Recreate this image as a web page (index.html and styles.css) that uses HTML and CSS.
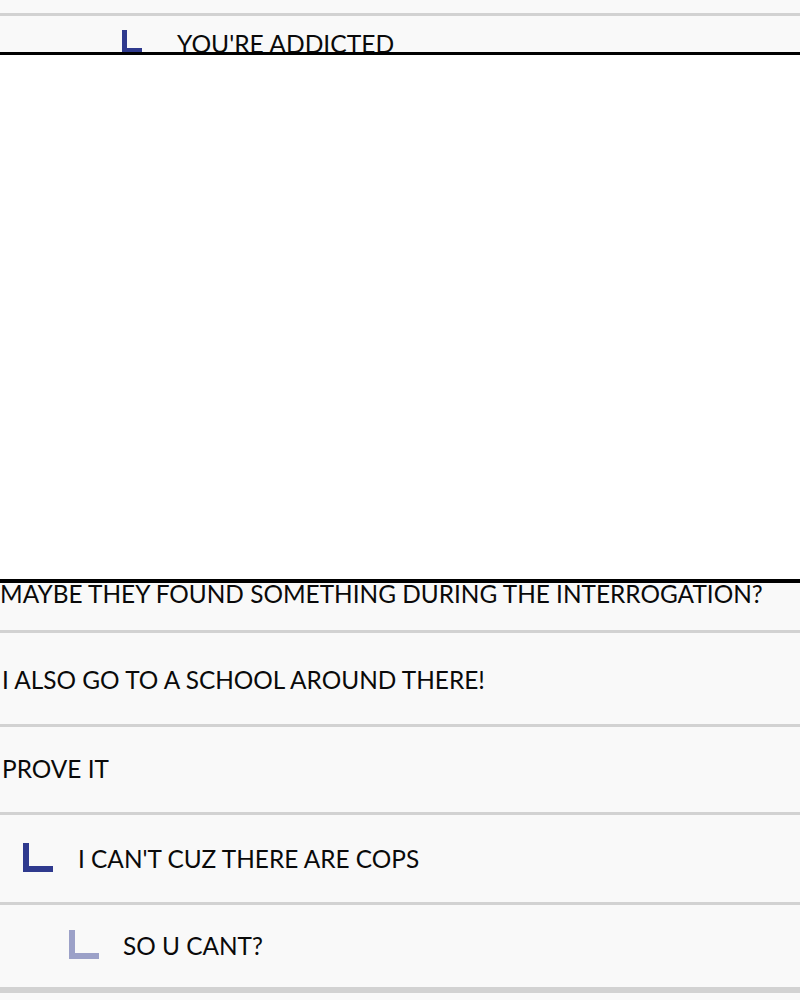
FILE: index.html
```html
<!DOCTYPE html>
<html>
<head>
    <title>Thread</title>
    <link rel="stylesheet" href="styles.css">
</head>
<body>
    <div class="thread">
        <div class="msg-tail"></div>

        <div class="msg msg-cut">
            <div class="msg-body level-top">
                <svg class="reply-icon small" viewBox="0 0 20 23"><path d="M0 0h5v18h15v5H0z"/></svg>
                <span class="msg-text">YOU'RE ADDICTED</span>
            </div>
        </div>

        <div class="panel"></div>

        <div class="msg msg-under">
            <span class="msg-text">MAYBE THEY FOUND SOMETHING DURING THE INTERROGATION?</span>
        </div>

        <div class="msg msg-plain roomy">
            <span class="msg-text">I ALSO GO TO A SCHOOL AROUND THERE!</span>
        </div>

        <div class="msg msg-plain">
            <span class="msg-text">PROVE IT</span>
        </div>

        <div class="msg mid">
            <div class="msg-body level-1">
                <svg class="reply-icon" viewBox="0 0 30 29"><path d="M0 0h6v23h24v6H0z"/></svg>
                <span class="msg-text">I CAN'T CUZ THERE ARE COPS</span>
            </div>
        </div>

        <div class="msg tight">
            <div class="msg-body level-2">
                <svg class="reply-icon faded" viewBox="0 0 30 29"><path d="M0 0h6v23h24v6H0z"/></svg>
                <span class="msg-text">SO U CANT?</span>
            </div>
        </div>

        <div class="msg-tail"></div>
    </div>
</body>
</html>
```

FILE: styles.css
```css
body {
    margin: 0;
    background-color: #f9f9f9;
    font-family: Lato, "Open Sans", sans-serif;
    color: #0a0a0a;
}

.thread {
    width: 800px;
}

.msg-tail {
    height: 13px;
    background-color: #f9f9f9;
    border-bottom: 3px solid #d2d2d2;
}

.msg-tail:last-child {
    border-bottom: none;
    border-top: 3px solid #d2d2d2;
}

.msg {
    padding: 27px 0 28px 0;
    line-height: 30px;
    font-size: 24.4px;
    background-color: #f9f9f9;
    border-bottom: 3px solid #d2d2d2;
}

.msg-plain {
    padding-left: 2px;
}

.roomy {
    padding-top: 32px;
    padding-bottom: 29px;
}

.mid {
    padding-top: 29px;
    padding-bottom: 28px;
}

.tight {
    padding-top: 26px;
    padding-bottom: 26px;
}

.msg-cut {
    height: 23px;
    padding: 13px 0 0 0;
    overflow: hidden;
    border-bottom: none;
    font-size: 24.6px;
}

.msg-under {
    padding: 0 0 25px 0;
    line-height: 22px;
}

.msg-body {
    display: flex;
    align-items: center;
}

.level-top {
    align-items: flex-start;
    padding-left: 122px;
    gap: 35px;
}

.level-1 {
    padding-left: 23px;
    gap: 25px;
}

.level-2 {
    padding-left: 69px;
    gap: 24px;
}

.reply-icon {
    width: 30px;
    height: 29px;
    flex-shrink: 0;
    fill: #2f3a8e;
    margin-top: -4px;
}

.reply-icon.small {
    width: 20px;
    height: 23px;
    margin-top: 1px;
}

.reply-icon.faded {
    fill: #9ca1c8;
}

.msg-text {
    white-space: nowrap;
}

.panel {
    height: 524px;
    background-color: #fff;
    border-top: 3px solid #000;
    border-bottom: 4px solid #000;
}
```
